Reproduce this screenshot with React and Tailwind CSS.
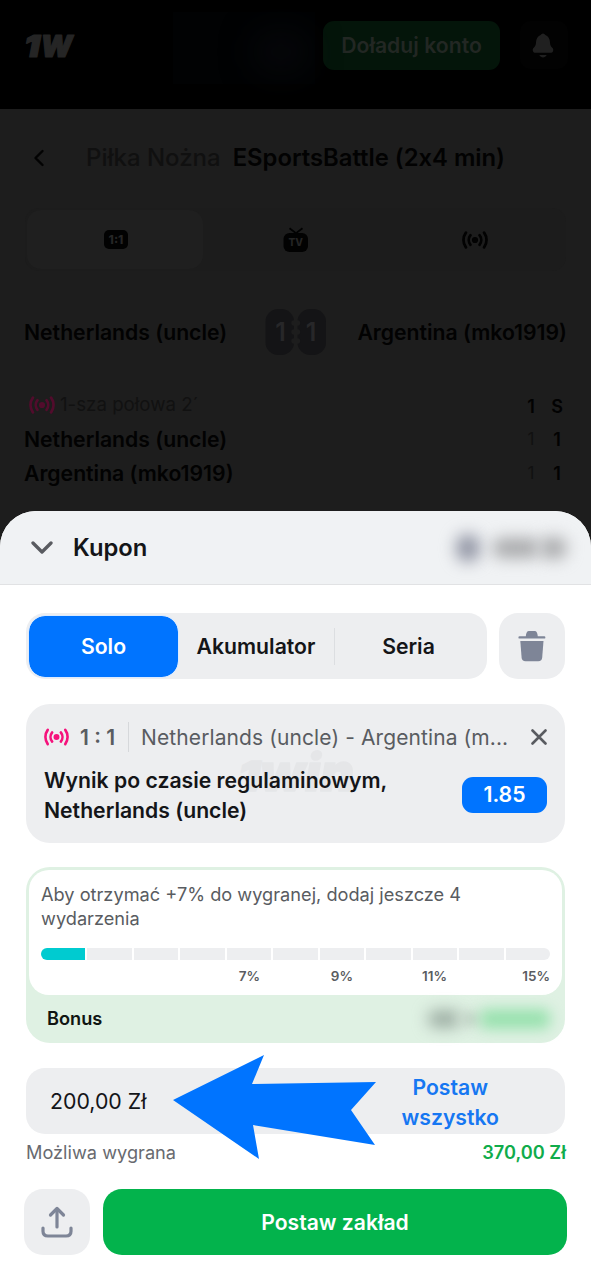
import React, { useState } from 'react';

// Live broadcast icon, used in the match header and in the coupon
const LiveIcon = ({ className }) => (
    <svg viewBox="0 0 26 18" className={className} fill="none" stroke="currentColor" strokeWidth="2.7" strokeLinecap="round">
        <circle cx="13" cy="9" r="3.1" fill="currentColor" stroke="none" />
        <path d="M8.500 4.200a7.600 7.600 0 0 0 0 9.600" />
        <path d="M17.500 4.200a7.600 7.600 0 0 1 0 9.600" />
        <path d="M3.900 1.600a12.500 12.500 0 0 0 0 14.800" />
        <path d="M22.100 1.600a12.500 12.500 0 0 1 0 14.800" />
    </svg>
);

const BellIcon = () => (
    <svg viewBox="0 0 22 26" className="h-[26px] w-[22px]" fill="#202020">
        <path d="M11 0.500c-1 0-1.800.8-2.400 1.500C5.400 3.400 4.200 6 4 9.500c-.1 2.500-.8 3.700-2.300 5.300C.6 16 .5 17 1 18.300c.4 1 1.300 1.500 2.500 1.500h15c1.200 0 2.100-.5 2.500-1.500.5-1.300.4-2.300-.7-3.500-1.500-1.600-2.200-2.800-2.300-5.300-.2-3.500-1.400-6.100-4.600-7.500C12.800 1.300 12 .5 11 .5z" />
        <path d="M7.300 22h7.400c-.8 1.500-2.100 2.400-3.700 2.400S8.100 23.500 7.300 22z" />
    </svg>
);

const TvIcon = () => (
    <svg viewBox="0 0 26 26" className="h-[26px] w-[26px]">
        <path d="M6.500 1.200l6.500 5 6.500-5" fill="none" stroke="#020202" strokeWidth="1.800" />
        <rect x="0.500" y="6" width="24.500" height="19" rx="6" fill="#020202" />
        <text x="12.800" y="19" textAnchor="middle" fontSize="10" fontWeight="800" fill="#242424">TV</text>
    </svg>
);

// Score digit on the flip board
const ScoreDigit = ({ notch, children }) => (
    <svg viewBox="0 0 29 46" className="h-[46px] w-[29px]">
        <rect x="0.500" y="0" width="28.500" height="46" rx="12.500" fill="#141416" />
        {[14, 23, 32].map((y) => (
            <circle key={y} cx={notch === 'right' ? 29 : 0.5} cy={y} r="2.700" fill="#1d1d1d" />
        ))}
        <text x={notch === 'right' ? 15.5 : 14} y="32" textAnchor="middle" fontSize="25" fontWeight="600" fill="#272729">
            {children}
        </text>
    </svg>
);

const TrashIcon = () => (
    <svg viewBox="0 0 28 32" className="h-8 w-7" fill="#7e8597">
        <path d="M7.800 6.200C8.200 3 8.800 1 11 1h5.600c2.200 0 2.800 2 3.200 5.200h6.400a1.200 1.200 0 0 1 0 2.400H1.600a1.200 1.200 0 0 1 0-2.400z" />
        <path d="M2.300 11h23.200l-1.300 16.400c-.2 2.500-1.600 3.800-3.900 3.800H7.500c-2.300 0-3.700-1.300-3.900-3.800z" />
    </svg>
);

const ShareIcon = () => (
    <svg viewBox="0 0 32 32" className="h-8 w-8" fill="none" stroke="#7e8597" strokeWidth="3.200" strokeLinecap="round" strokeLinejoin="round">
        <path d="M16 21V3" />
        <path d="M9.500 9L16 2.500 22.500 9" />
        <path d="M2 22v3.300c0 3 2 4.700 5 4.700h18c3 0 5-1.700 5-4.700V22" />
    </svg>
);

const Logo = () => (
    <svg viewBox="0 0 52 28" className="h-[28px] w-[52px] overflow-visible" fill="#252525" stroke="#252525" strokeWidth="1.2" strokeLinejoin="round">
        <text x="1" y="24.500" fontSize="30" fontWeight="900" fontStyle="italic" textLength="16" lengthAdjust="spacingAndGlyphs">1</text>
        <text x="17.500" y="24.500" fontSize="30" fontWeight="900" fontStyle="italic" textLength="32" lengthAdjust="spacingAndGlyphs">W</text>
    </svg>
);

// Faint brand mark behind the selected event
const Watermark = () => (
    <svg viewBox="0 0 120 56" className="absolute top-[42px] left-[210px] h-14 w-[120px] overflow-visible" fill="#e5e6e8" stroke="#e5e6e8" strokeWidth="1.500" strokeLinejoin="round">
        <text x="2" y="45" fontSize="41" fontWeight="900" fontStyle="italic" textLength="22" lengthAdjust="spacingAndGlyphs">1</text>
        <text x="24" y="45" fontSize="52" fontWeight="900" fontStyle="italic" textLength="94" lengthAdjust="spacingAndGlyphs">win</text>
    </svg>
);

const ScoreRow = ({ name, first, total }) => (
    <div className="flex h-[34px] items-center pt-[1px] text-[21.2px] font-semibold text-[#020202]">
        <span className="flex-1">{name}</span>
        <span className="w-[26px] text-center text-[17px] font-normal text-[#111111]">{first}</span>
        <span className="w-[26px] text-center text-[18px]">{total}</span>
    </div>
);

const MatchPage = () => (
    <div className="h-[511px]">
        {/* Top bar */}
        <header className="flex h-[109px] items-start bg-black pl-[23px] pr-[23px]">
            <div className="mt-[32px] flex-1">
                <Logo />
            </div>
            <div className="mt-3 mr-2 h-[72px] w-[142px] bg-[#010203] pt-5 pl-20">
                <div className="h-10 w-14 rounded-full bg-[#06070a] blur-lg" />
            </div>
            <button className="mt-[21px] h-[49px] w-[177px] rounded-[11px] bg-[#04150a] text-[21.2px] font-semibold text-[#222723]">
                Doładuj konto
            </button>
            <button className="mt-[21px] ml-5 flex h-12 w-12 items-center justify-center rounded-[10px] bg-[#020202] pr-[2px] pt-[1px]">
                <BellIcon />
            </button>
        </header>

        {/* Breadcrumbs */}
        <div className="flex h-[98px] items-center pl-[33px] text-[24px] font-semibold">
            <svg viewBox="0 0 12 18" className="h-[18px] w-3" fill="none" stroke="#020202" strokeWidth="2.400" strokeLinecap="round" strokeLinejoin="round">
                <path d="M9.500 2L2.500 9l7 7" />
            </svg>
            <span className="ml-[41px] font-medium text-[#101010]">Piłka Nożna</span>
            <span className="ml-3 text-[23.8px] text-[#020202] [font-feature-settings:'calt'_0]">ESportsBattle (2x4 min)</span>
        </div>

        <div className="mx-[25px] mt-px flex h-[63px] rounded-[14px] bg-[#1c1c1c] p-[2px]">
            <div className="flex w-[176px] items-center justify-center rounded-[14px] bg-[#1f1f1f] pl-[2px]">
                <span className="flex h-[19px] w-6 items-center justify-center rounded-[5px] bg-[#020202] text-[12px] font-extrabold text-[#262626]">
                    1:1
                </span>
            </div>
            <div className="flex flex-1 items-center justify-center pl-1">
                <TvIcon />
            </div>
            <div className="flex flex-1 items-center justify-center pl-[2px]">
                <LiveIcon className="h-[18px] w-[26px] text-[#020202]" />
            </div>
        </div>

        <div className="mt-[38px] flex h-[46px] items-center px-6 text-[21.2px] font-semibold text-[#020202]">
            <span className="flex-1 pt-[2px]">Netherlands (uncle)</span>
            <div className="flex gap-[3px]">
                <ScoreDigit notch="right">1</ScoreDigit>
                <ScoreDigit notch="left">1</ScoreDigit>
            </div>
            <span className="flex-1 pt-[2px] text-right">Argentina (mko1919)</span>
        </div>

        <div className="mt-[33px] flex h-[34px] items-center pl-[29px] pr-[21px] text-[#020202]">
            <LiveIcon className="h-[18px] w-[26px] text-[#520c2c]" />
            <span className="ml-[5px] flex-1 text-[18.700px] text-[#111111]">1-sza połowa 2´</span>
            <span className="w-[26px] pt-[2px] text-center text-[18px] font-semibold">1</span>
            <span className="w-[26px] pt-[2px] text-center text-[18px] font-semibold">S</span>
        </div>
        <div className="pl-6 pr-[21px]">
            <ScoreRow name="Netherlands (uncle)" first="1" total="1" />
            <ScoreRow name="Argentina (mko1919)" first="1" total="1" />
        </div>
    </div>
);

const BonusCard = () => (
    <div className="mt-6 h-[176px] rounded-[24px] bg-[#dff1e3] p-[3px]">
        <div className="h-[125px] rounded-[20px] bg-white px-3 pt-[12px]">
            <p className="text-[18.2px] leading-6 text-[#595c61]">
                Aby otrzymać +7% do wygranej, dodaj jeszcze 4<br />wydarzenia
            </p>
            <div className="mt-[18px] flex h-3 gap-[2px] overflow-hidden rounded-full">
                {Array.from({ length: 11 }, (_, i) => (
                    <div key={i} className={i === 0 ? 'flex-1 bg-[#00cbd0]' : 'flex-1 bg-[#edeef0]'} />
                ))}
            </div>
            <div className="mt-[6px] flex text-right text-[13.5px] leading-5 font-semibold text-[#595c61]">
                <span className="w-[219px]">7%</span>
                <span className="w-[93px]">9%</span>
                <span className="w-[94px]">11%</span>
                <span className="flex-1">15%</span>
            </div>
        </div>
        <div className="flex h-[45px] items-center justify-between pr-3 pl-[18px] pt-[2px]">
            <span className="text-[18.2px] font-semibold text-[#101512]">Bonus</span>
            <div className="flex h-6 items-center">
                <div className="h-4 w-8 rounded-full bg-[#94a59b] blur-[8px]" />
                <div className="h-3 w-5 bg-[#bfd0c3] blur-[6px]" />
                <div className="h-[20px] w-[70px] rounded-md bg-[#98e1ae] blur-[7px]" />
            </div>
        </div>
    </div>
);

const modes = [
    { name: 'Solo', width: 'w-[149px]' },
    { name: 'Akumulator', width: 'w-[157px]' },
    { name: 'Seria', width: 'w-[147px]' },
];

const Coupon = () => {
    const [mode, setMode] = useState('Solo');

    return (
        <div className="h-[769px] overflow-hidden rounded-t-[36px] bg-white">
            <div className="flex h-[74px] items-center border-b border-[#e1e2e4] bg-[#f0f2f4] pr-6 pl-[31px]">
                <svg viewBox="0 0 22 14" className="h-[14px] w-[22px]" fill="none" stroke="#595b60" strokeWidth="3.300" strokeLinecap="round" strokeLinejoin="round">
                    <path d="M2 2l9 9 9-9" />
                </svg>
                <span className="ml-5 flex-1 text-[23.8px] font-semibold text-[#141518]">Kupon</span>
                {/* Balance is hidden */}
                <div className="h-7 w-6 rounded-full bg-[#9094a3] blur-[8px]" />
                <div className="ml-3 h-5 w-12 rounded-full bg-[#a8a9ab] blur-[8px]" />
                <div className="h-[22px] w-[27px] rounded-full bg-[#a8a9ab] blur-[8px]" />
            </div>

            <div className="px-[26px] pt-7">
                {/* Coupon type */}
                <div className="flex gap-3">
                    <div className="flex h-[66px] w-[461px] items-center rounded-[19px] bg-[#edeef0] p-[3px]">
                        {modes.map(({ name, width }) => (
                            <button
                                key={name}
                                onClick={() => setMode(name)}
                                className={
                                    name === mode
                                        ? `${width} h-[61px] rounded-[16px] bg-[#0074ff] pt-px text-[21.2px] font-semibold text-white outline-1 outline-[#dcebff]`
                                        : `${width} h-[37px] border-r border-[#dcdee1] pt-px text-[21.2px] font-semibold text-[#141518] last:border-r-0`
                                }
                            >
                                {name}
                            </button>
                        ))}
                    </div>
                    <button className="flex h-[66px] w-[66px] items-center justify-center rounded-[19px] bg-[#edeef0]">
                        <TrashIcon />
                    </button>
                </div>

                {/* Selected event */}
                <div className="relative mt-[25px] h-[139px] rounded-[24px] bg-[#edeef0] px-[18px] pt-[18px]">
                    <Watermark />
                    <div className="relative flex h-[30px] items-center text-[21px] text-[#595c61]">
                        <LiveIcon className="h-[18px] w-[25px] text-[#f5127c]" />
                        <span className="ml-[11px] pt-px font-semibold">1 : 1</span>
                        <span className="mx-[13px] h-[30px] w-px bg-[#d6d8db]" />
                        <span className="-ml-px pt-px tracking-[0.1px] whitespace-nowrap">Netherlands (uncle) - Argentina (m...</span>
                        <svg viewBox="0 0 16 16" className="ml-auto h-4 w-4" fill="none" stroke="#595b60" strokeWidth="2.600" strokeLinecap="round">
                            <path d="M1.500 1.500l13 13M14.500 1.500l-13 13" />
                        </svg>
                    </div>
                    <div className="relative mt-[13px] flex items-center justify-between">
                        <p className="text-[21.2px] leading-[30px] font-semibold text-[#141518]">
                            Wynik po czasie regulaminowym,<br />Netherlands (uncle)
                        </p>
                        <span className="flex h-9 w-[85px] items-center justify-center rounded-[11px] bg-[#0074ff] text-[21.2px] font-semibold text-white">
                            1.85
                        </span>
                    </div>
                </div>

                <BonusCard />

                {/* Stake */}
                <div className="relative mt-[25px] flex h-[66px] items-center justify-between rounded-[19px] bg-[#edeef0] pr-[66px] pl-6">
                    <span className="pt-[2px] text-[21.3px] text-[#141518]">200,00 Zł</span>
                    <button className="pt-px text-[21.2px] leading-[30px] font-semibold text-[#1677f2]">
                        Postaw<br />wszystko
                    </button>
                    <svg viewBox="0 0 204 106" className="absolute -top-[13px] left-[147px] h-[106px] w-[204px]" fill="#0074ff">
                        <path d="M0 45L91 0 79 29 203 27 178 55 202 90 80 70 86 104z" />
                    </svg>
                </div>
                <div className="mt-[5px] -mr-px flex h-7 items-center justify-between text-[18.2px]">
                    <span className="text-[#686a6f]">Możliwa wygrana</span>
                    <span className="font-semibold text-[#10ac4b]">370,00 Zł</span>
                </div>

                <div className="-mx-[2px] mt-[22px] flex gap-[13px]">
                    <button className="flex h-[66px] w-[66px] items-center justify-center rounded-[19px] bg-[#edeef0]">
                        <ShareIcon />
                    </button>
                    <button className="h-[66px] flex-1 rounded-[19px] bg-[#03b34c] pt-px text-[21.1px] font-semibold text-white">
                        Postaw zakład
                    </button>
                </div>
            </div>
        </div>
    );
};

const App = () => {
    return (
        <div className="h-[1280px] w-[591px] overflow-hidden bg-[#1d1d1d] font-['Inter',sans-serif]">
            <MatchPage />
            <Coupon />
        </div>
    );
};

export default App;
